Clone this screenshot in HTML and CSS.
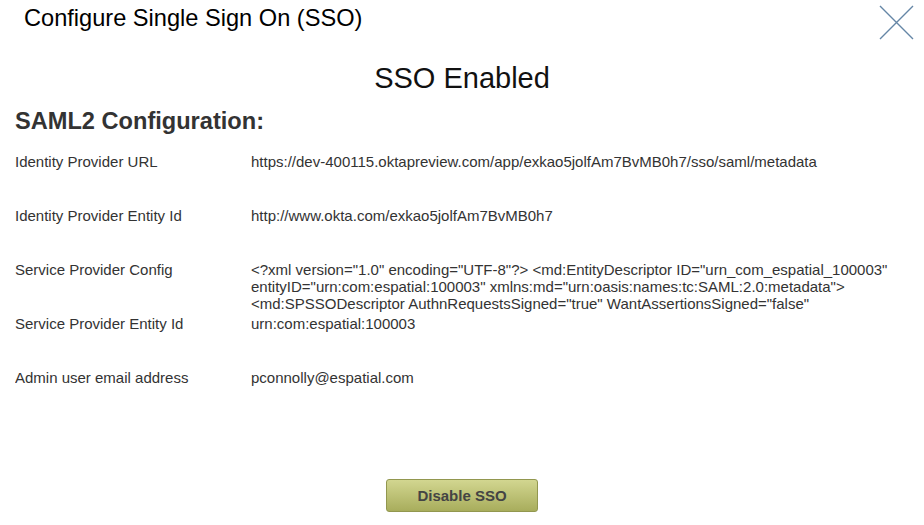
FILE: index.html
```html
<!DOCTYPE html>
<html lang="en">
<head>
    <meta charset="UTF-8">
    <title>Configure Single Sign On (SSO)</title>
    <link rel="stylesheet" href="styles.css">
</head>
<body>
    <div class="dialog">
        <div class="dialog-header">
            <h1 class="dialog-title">Configure Single Sign On (SSO)</h1>
            <button class="close-btn" title="Close">
                <svg width="36" height="36" viewBox="0 0 36 36">
                    <path d="M2 2 L35 35 M35 2 L2 35" stroke="#6586a6" stroke-width="1.4" fill="none"/>
                </svg>
            </button>
        </div>
        <h2 class="status">SSO Enabled</h2>
        <h3 class="section-title">SAML2 Configuration:</h3>
        <div class="config-table">
            <div class="config-label">Identity Provider URL</div>
            <div class="config-value">https://dev-400115.oktapreview.com/app/exkao5jolfAm7BvMB0h7/sso/saml/metadata</div>

            <div class="config-label">Identity Provider Entity Id</div>
            <div class="config-value">http://www.okta.com/exkao5jolfAm7BvMB0h7</div>

            <div class="config-label">Service Provider Config</div>
            <div class="config-value">&lt;?xml version="1.0" encoding="UTF-8"?&gt; &lt;md:EntityDescriptor ID="urn_com_espatial_100003" entityID="urn:com:espatial:100003" xmlns:md="urn:oasis:names:tc:SAML:2.0:metadata"&gt; &lt;md:SPSSODescriptor AuthnRequestsSigned="true" WantAssertionsSigned="false"</div>

            <div class="config-label">Service Provider Entity Id</div>
            <div class="config-value">urn:com:espatial:100003</div>

            <div class="config-label">Admin user email address</div>
            <div class="config-value">pconnolly@espatial.com</div>
        </div>
        <div class="actions">
            <button class="disable-btn">Disable SSO</button>
        </div>
    </div>
</body>
</html>
```

FILE: styles.css
```css
body {
    margin: 0;
    font-family: "Liberation Sans", Arial, sans-serif;
    background: #fff;
    color: #333;
}
.dialog {
    width: 924px;
    height: 525px;
    overflow: hidden;
}
.dialog-header {
    display: flex;
    justify-content: space-between;
    align-items: flex-start;
    height: 40px;
}
.dialog-title {
    margin: 5px 0 0 24px;
    font-size: 23.6px;
    font-weight: normal;
    color: #000;
    line-height: 26px;
}
.close-btn {
    margin: 4px 10px 0 0;
    padding: 0;
    border: none;
    background: none;
    cursor: pointer;
    width: 36px;
    height: 36px;
}
.status {
    margin: 22px 0 0;
    text-align: center;
    font-size: 29px;
    font-weight: normal;
    line-height: 33px;
    color: #111;
}
.section-title {
    margin: 12px 0 0 15px;
    font-size: 23.6px;
    font-weight: bold;
    line-height: 28px;
    color: #333;
}
.config-table {
    display: grid;
    grid-template-columns: 236px 652px;
    grid-auto-rows: 54px;
    margin-top: 18px;
    padding-left: 15px;
    font-size: 15px;
    line-height: 17px;
}
.config-label,
.config-value {
    max-height: 51px;
    overflow: hidden;
}
.actions {
    display: flex;
    justify-content: center;
    margin-top: 56px;
}
.disable-btn {
    width: 152px;
    height: 33px;
    font-family: "Liberation Sans", Arial, sans-serif;
    font-size: 15px;
    font-weight: bold;
    color: #444;
    background: linear-gradient(#d2d690, #a8ad5c);
    border: 1px solid #92974f;
    border-radius: 3px;
    cursor: pointer;
}
.disable-btn:hover {
    background: linear-gradient(#c8cc84, #9ea352);
}
```
